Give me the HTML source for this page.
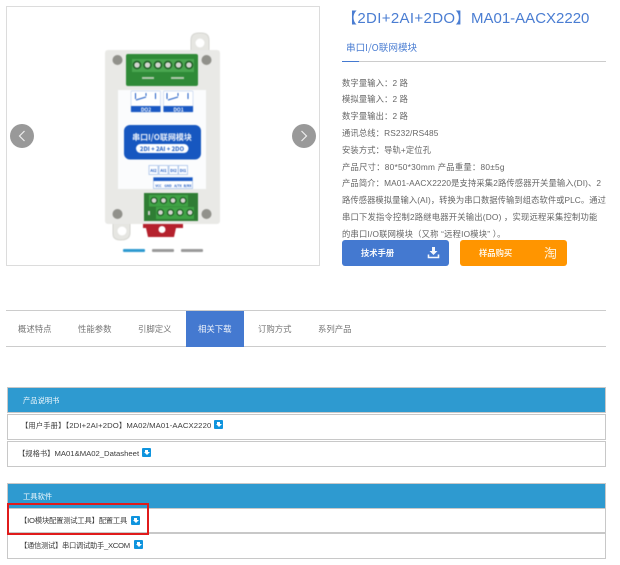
<!DOCTYPE html>
<html lang="zh"><head><meta charset="utf-8"><title>MA01-AACX2220</title>
<style>
html,body{margin:0;padding:0;background:#fff;width:620px;height:565px;overflow:hidden}
body{position:relative;font-family:"Liberation Sans","Noto Sans CJK SC",sans-serif;color:#666}
.a{position:absolute;white-space:nowrap}
.cjk{font-family:"Noto Sans CJK SC","Liberation Sans",sans-serif}
.spec{position:absolute;left:342px;font:8.3px/12px "Liberation Sans","Noto Sans CJK SC",sans-serif;color:#666;white-space:nowrap;letter-spacing:.12px}
.tab{position:absolute;top:311px;height:35px;font:8.4px/36px "Noto Sans CJK SC",sans-serif;color:#777;white-space:nowrap}
.box{position:absolute;left:7px;width:599px;box-sizing:border-box;border:1px solid #c8c8c8}
.head{background:#2e9ad0;color:#f0f8fc;font:7.3px "Noto Sans CJK SC",sans-serif;height:26px;line-height:26px;padding-left:15px}
.row{background:#fff;color:#3c3c3c;font:7.3px "Noto Sans CJK SC",sans-serif;height:26px;white-space:nowrap}
.row span{font:7.7px "Liberation Sans",sans-serif}
.dl{position:absolute;width:9px;height:9px;background:#0f94de;border-radius:1px}
.dl:after{content:"";position:absolute;left:3px;top:1.5px;width:3px;height:2.5px;background:#fff}
.dl:before{content:"";position:absolute;left:1.5px;top:4px;border:3px solid transparent;border-top:3px solid #fff;border-bottom:0}
</style></head><body>

<div class="a" style="left:6px;top:6px;width:312px;height:258px;border:1px solid #dcdcdc"></div>

<svg class="a" style="left:0;top:0;filter:blur(.55px)" width="330" height="280" viewBox="0 0 330 280" font-family="'Noto Sans CJK SC',sans-serif">
 <path d="M191 52v-12q0-7 8-7h2q8 0 8 7v12z" fill="#e6e6e2" stroke="#d5d5d0"/><circle cx="200" cy="43" r="4.5" fill="#fff"/>
 <path d="M113 222v12q0 6 8 6t9-6v-12z" fill="#e6e6e2" stroke="#d5d5d0"/><circle cx="122" cy="231" r="4.5" fill="#fff"/>
 <path d="M143 224h40v4h-7l-2 9h-26l-2-9h-3z" fill="#b5212d"/><circle cx="162" cy="229.500" r="3.500" fill="#fff"/>
 <rect x="105" y="50" width="115" height="174" rx="3" fill="#e9e9e6"/>
 <rect x="126" y="54" width="72" height="32" rx="2" fill="#2f8a37"/>
 <rect x="132" y="59" width="62" height="13" fill="#4aa650"/>
 <g fill="#d4d4d0" stroke="#1c5c22" stroke-width="1.500"><circle cx="137" cy="65" r="3.500"/><circle cx="147.500" cy="65" r="3.500"/><circle cx="158" cy="65" r="3.500"/><circle cx="168" cy="65" r="3.500"/><circle cx="178.500" cy="65" r="3.500"/><circle cx="189" cy="65" r="3.500"/></g>
 <rect x="142" y="77" width="12" height="2" fill="#b5c9b0"/><rect x="171" y="77" width="13" height="2" fill="#b5c9b0"/>
 <g fill="#91918b"><circle cx="117.500" cy="60" r="5"/><circle cx="206.500" cy="60" r="5"/><circle cx="117.500" cy="214" r="5"/><circle cx="206.500" cy="214" r="5"/></g>
 <rect x="118" y="90" width="88" height="99" fill="#fbfcfd"/>
 <rect x="131" y="91" width="29.500" height="21" rx="1" fill="#fff" stroke="#c4d5ef" stroke-width=".7"/><rect x="131" y="106" width="29.500" height="6" fill="#1a59c4"/>
 <rect x="163.500" y="91" width="29.500" height="21" rx="1" fill="#fff" stroke="#c4d5ef" stroke-width=".7"/><rect x="163.500" y="106" width="29.500" height="6" fill="#1a59c4"/>
 <path d="M135.500 93v6M146 93v3M155.500 93v6M136 100l10-3M167 93v6M178 93v3M188 93v6M168 100l10-3" stroke="#1a59c4" fill="none"/>
 <text x="146" y="111.500" font-size="5" font-weight="700" fill="#fff" text-anchor="middle">DO2</text>
 <text x="178.500" y="111.500" font-size="5" font-weight="700" fill="#fff" text-anchor="middle">DO1</text>
 <rect x="124" y="125" width="77" height="34.500" rx="6" fill="#1757c0"/>
 <text x="162" y="140" font-size="8" font-weight="700" fill="#eef3fb" text-anchor="middle">串口I/O联网模块</text>
 <rect x="136" y="144" width="52.500" height="9" rx="4.500" fill="#fff"/>
 <text x="162" y="151" font-size="6" font-weight="700" fill="#1757c0" text-anchor="middle">2DI + 2AI + 2DO</text>
 <g fill="#fff" stroke="#a8c2ea" stroke-width=".8"><rect x="149" y="165.500" width="9" height="9"/><rect x="159" y="165.500" width="9" height="9"/><rect x="169" y="165.500" width="9" height="9"/><rect x="178.500" y="165.500" width="9" height="9"/><rect x="153.500" y="177.500" width="39" height="11"/></g>
 <g font-size="4" font-weight="700" fill="#1a59c4" text-anchor="middle"><text x="153.500" y="172">AI2</text><text x="163.500" y="172">AI1</text><text x="173.500" y="172">DI2</text><text x="183" y="172">DI1</text></g>
 <rect x="153.500" y="177.500" width="39" height="3.500" fill="#1a59c4"/>
 <g font-size="3.300" font-weight="700" fill="#1a59c4" text-anchor="middle"><text x="158.500" y="187">VCC</text><text x="168" y="187">GND</text><text x="178" y="187">A/TX</text><text x="187.500" y="187">B/RX</text></g>
 <rect x="144" y="193" width="54" height="28" fill="#2f7d34"/>
 <rect x="149" y="195" width="39" height="11.500" fill="#3fa245"/><rect x="156" y="207" width="38" height="12" fill="#3fa245"/>
 <g fill="#d4d4d0" stroke="#1c5c22" stroke-width="1.200"><circle cx="154" cy="200.500" r="3"/><circle cx="163.500" cy="200.500" r="3"/><circle cx="173" cy="200.500" r="3"/><circle cx="183" cy="200.500" r="3"/><circle cx="160.500" cy="212.500" r="3"/><circle cx="170.500" cy="212.500" r="3"/><circle cx="180" cy="212.500" r="3"/><circle cx="190" cy="212.500" r="3"/></g>
 <rect x="148" y="211" width="2" height="4" fill="#ccc"/>
 <rect x="123" y="249" width="22" height="3" rx="1" fill="#2e9ad0"/>
 <rect x="152" y="249" width="22" height="3" rx="1" fill="#9a9a9a"/>
 <rect x="181" y="249" width="22" height="3" rx="1" fill="#9a9a9a"/>
</svg>

<svg class="a" style="left:10px;top:124px" width="24" height="24"><circle cx="12" cy="12" r="12" fill="#999"/><path d="M14.500 7l-5 5 5 5" fill="none" stroke="#eee" stroke-width="1.200"/></svg>
<svg class="a" style="left:292px;top:124px" width="24" height="24"><circle cx="12" cy="12" r="12" fill="#999"/><path d="M9.500 7l5 5-5 5" fill="none" stroke="#eee" stroke-width="1.200"/></svg>

<div class="a" style="left:342px;top:8px;font-size:15px;line-height:22px;color:#4a7dd2;letter-spacing:.35px">【2DI+2AI+2DO】</div>
<div class="a" style="left:471px;top:8px;font-size:15px;line-height:22px;color:#4a7dd2">MA01-AACX2220</div>
<div class="a cjk" style="left:346px;top:39px;font-size:9.600px;line-height:16px;color:#4a7dd2">串口I/O联网模块</div>
<div class="a" style="left:342px;top:61px;width:264px;height:1px;background:#ccc"></div>
<div class="a" style="left:342px;top:61px;width:17px;height:1px;background:#4479d0"></div>

<div class="spec" style="top:77px">数字量输入：2 路</div>
<div class="spec" style="top:93px">模拟量输入：2 路</div>
<div class="spec" style="top:110px">数字量输出：2 路</div>
<div class="spec" style="top:127px">通讯总线：RS232/RS485</div>
<div class="spec" style="top:144px">安装方式：导轨+定位孔</div>
<div class="spec" style="top:161px;letter-spacing:.25px">产品尺寸：80*50*30mm 产品重量：80±5g</div>
<div class="spec" style="top:177px">产品简介：MA01-AACX2220是支持采集2路传感器开关量输入(DI)、2</div>
<div class="spec" style="top:194px;letter-spacing:.06px">路传感器模拟量输入(AI)，转换为串口数据传输到组态软件或PLC。通过</div>
<div class="spec" style="top:211px;letter-spacing:.2px">串口下发指令控制2路继电器开关输出(DO) ，实现远程采集控制功能</div>
<div class="spec" style="top:228px;letter-spacing:.2px">的串口I/O联网模块（又称 “远程IO模块” ）。</div>

<div class="a" style="left:342px;top:240px;width:107px;height:26px;background:#4479d0;border-radius:3px"></div>
<div class="a cjk" style="left:361px;top:246px;font-size:8.300px;line-height:14px;font-weight:700;color:#f4f7fc">技术手册</div>
<svg class="a" style="left:427px;top:246px" width="13" height="13"><path d="M5 1h3v4h2.500L6.500 9 2.500 5H5z" fill="#f4f7fc"/><path d="M1.500 8.500v3h10v-3" fill="none" stroke="#f4f7fc" stroke-width="1.600"/></svg>

<div class="a" style="left:460px;top:240px;width:107px;height:26px;background:#ff9500;border-radius:3px"></div>
<div class="a cjk" style="left:479px;top:246px;font-size:8.300px;line-height:14px;font-weight:700;color:#fff2dc">样品购买</div>
<div class="a cjk" style="left:544px;top:245px;font-size:13px;line-height:15px;color:#fff2dc">淘</div>

<div class="a" style="left:6px;top:310px;width:600px;height:1px;background:#ccc"></div>
<div class="a" style="left:6px;top:346px;width:600px;height:1px;background:#ccc"></div>
<div class="a" style="left:186px;top:311px;width:58px;height:36px;background:#4479d0"></div>
<div class="tab" style="left:18px">概述特点</div>
<div class="tab" style="left:78px">性能参数</div>
<div class="tab" style="left:138px">引脚定义</div>
<div class="tab" style="left:198px;color:#f0f4fb">相关下载</div>
<div class="tab" style="left:258px">订购方式</div>
<div class="tab" style="left:318px">系列产品</div>

<div class="box head" style="top:387px">产品说明书</div>
<div class="box row" style="top:414px;padding-left:13px;line-height:23px;letter-spacing:.12px">【用户手册】【<span>2DI+2AI+2DO</span>】<span>MA02/MA01-AACX2220</span></div>
<div class="dl" style="left:214px;top:420px"></div>
<div class="box row" style="top:441px;padding-left:10px;line-height:24px">【规格书】<span>MA01&amp;MA02_Datasheet</span></div>
<div class="dl" style="left:142px;top:448px"></div>

<div class="box head" style="top:483px;line-height:27px">工具软件</div>
<div class="box row" style="top:508px;height:25px;padding-left:12px;line-height:25px;letter-spacing:-.2px">【<span>IO</span>模块配置测试工具】配置工具</div>
<div class="dl" style="left:131px;top:516px"></div>
<div class="box row" style="top:533px;height:26px;padding-left:12px;line-height:25px;letter-spacing:-.3px">【通信测试】串口调试助手<span>_XCOM</span></div>
<div class="dl" style="left:134px;top:540px"></div>

<div class="a" style="left:7px;top:503px;width:138px;height:28px;border:2px solid #e01b1b"></div>
</body></html>
